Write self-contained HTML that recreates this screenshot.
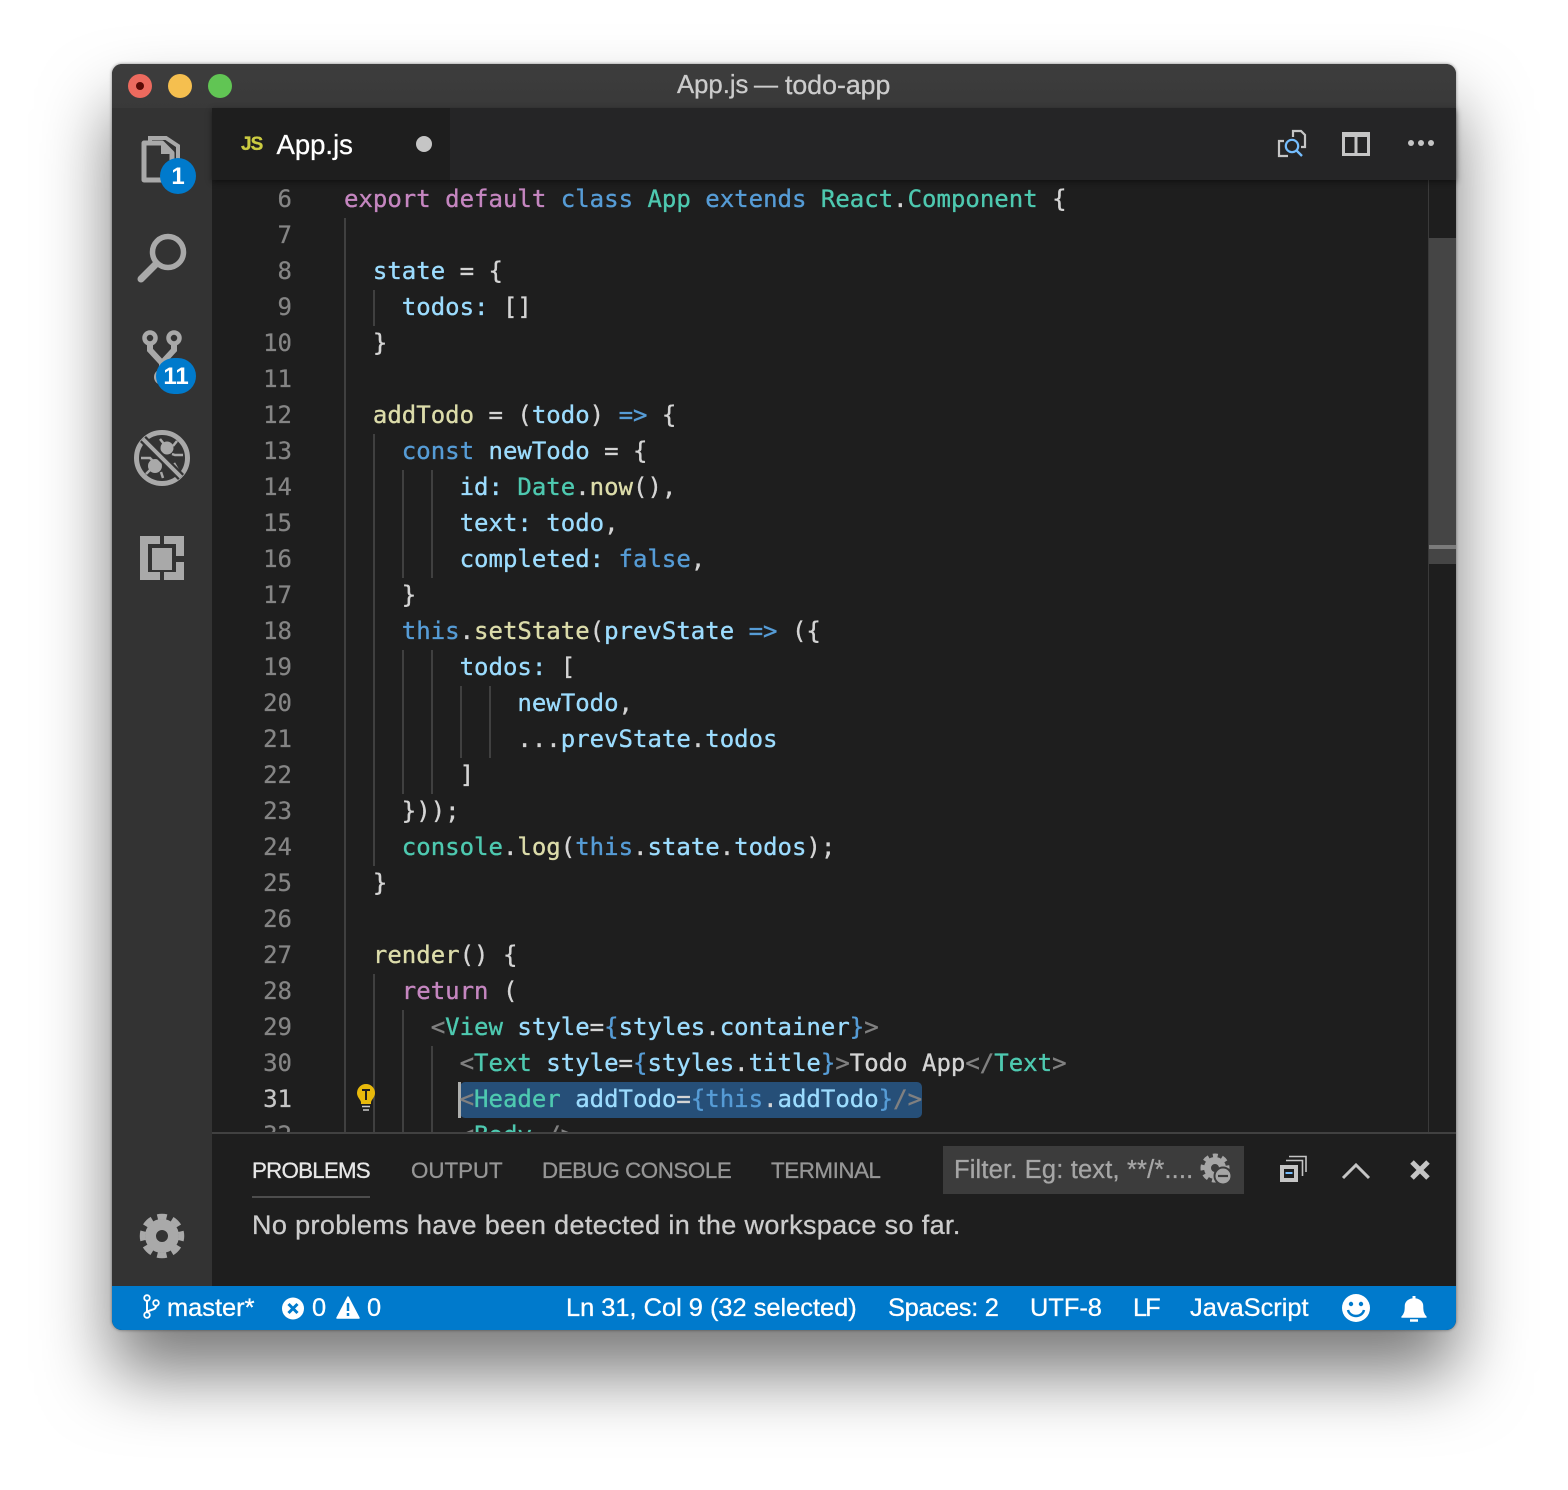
<!DOCTYPE html>
<html lang="en"><head><meta charset="utf-8"><title>App.js — todo-app</title>
<style>
html,body{margin:0;padding:0;background:#fff}
body{width:1568px;height:1490px;position:relative;overflow:hidden;font-family:"Liberation Sans",sans-serif}
.win{position:absolute;left:112px;top:64px;width:1344px;height:1266px;border-radius:10px;background:#1e1e1e;box-shadow:0 44px 70px rgba(0,0,0,.52),0 0 3px rgba(0,0,0,.45)}
.abs,.t{position:absolute}
.t{white-space:pre;line-height:36px;-webkit-text-stroke:.3px currentColor}
.title{left:0;top:0;width:1344px;height:44px;background:linear-gradient(#3d3d3d,#393939);border-radius:10px 10px 0 0}
.activity{left:0;top:44px;width:100px;height:1178px;background:#333}
.tabs{left:100px;top:44px;width:1244px;height:72px;background:#252526;box-shadow:0 2px 6px rgba(0,0,0,.45);z-index:3}
.tab{left:0;top:0;width:238px;height:72px;background:#1e1e1e}
.code{left:100px;top:116px;width:1244px;height:952px;overflow:hidden;background:#1e1e1e}
.ln{position:absolute;left:0;width:80px;text-align:right;height:36px;color:#858585;font:24px/38px "DejaVu Sans Mono","Liberation Mono",monospace;-webkit-text-stroke:.25px currentColor}
.src{position:absolute;left:132px;height:36px;white-space:pre;font:24px/36px "DejaVu Sans Mono","Liberation Mono",monospace;color:#d4d4d4;-webkit-text-stroke:.35px currentColor}
.g{position:absolute;width:2px;background:#404040}
.k{color:#c586c0}.b{color:#569cd6}.c{color:#4ec9b0}.v{color:#9cdcfe}.f{color:#dcdcaa}.p{color:#808080}
.panel{left:100px;top:1068px;width:1244px;height:154px;background:#1e1e1e;border-top:2px solid #414141;box-sizing:border-box}
.status{left:0;top:1222px;width:1344px;height:44px;background:#007acc;border-radius:0 0 10px 10px;color:#fff}
.status .t{font-size:25.4px}
.badge{position:absolute;background:#007acc;color:#fff;font-weight:bold;font-size:24px;line-height:38px;height:36px;text-align:center;border-radius:18px}
svg{position:absolute;overflow:visible}
</style></head><body>
<div class="win">
 <div class="abs title">
  <div class="abs" style="left:16px;top:10px;width:24px;height:24px;border-radius:50%;background:#ec6a5e"><div class="abs" style="left:8px;top:8px;width:8px;height:8px;border-radius:50%;background:#5a0b06"></div></div>
  <div class="abs" style="left:56px;top:10px;width:24px;height:24px;border-radius:50%;background:#f5bf4f"></div>
  <div class="abs" style="left:96px;top:10px;width:24px;height:24px;border-radius:50%;background:#61c554"></div>
  <div class="t" style="left:565px;top:3px;font-size:25.700px;color:#ccc">App.js</div>
  <div class="t" style="left:642px;top:3px;font-size:24px;line-height:38px;color:#ccc">—</div>
  <div class="t" style="left:673px;top:3px;font-size:26.700px;color:#ccc">todo-app</div>
 </div>

 <div class="abs activity">
  <svg style="left:0;top:0" width="100" height="1178" fill="none" stroke="#a9a9a9">
   <!-- explorer -->
   <path d="M38 35V30H54L66 38V62" stroke-width="4"/>
   <path d="M32 35H50L60 45V72H32Z" stroke-width="5" fill="#333" stroke-linejoin="round"/>
   <path d="M49 34V46H61Z" fill="#a9a9a9" stroke="none"/>
   <!-- search -->
   <circle cx="56" cy="144" r="15.500" stroke-width="5.500"/>
   <path d="M44 156L29 171" stroke-width="7" stroke-linecap="round"/>
   <!-- scm -->
   <circle cx="38" cy="230" r="5.500" stroke-width="4.500"/><circle cx="62" cy="230" r="5.500" stroke-width="4.500"/>
   <path d="M38 236V242L50 255V268M62 236V242L50 255" stroke-width="6"/>
   <circle cx="50" cy="269" r="8" fill="#a9a9a9" stroke="none"/>
   <!-- debug -->
   <circle cx="50" cy="350" r="25.500" stroke-width="5"/>
   <circle cx="55" cy="340" r="6.500" fill="#a9a9a9" stroke="none"/>
   <circle cx="43" cy="358" r="7" fill="#a9a9a9" stroke="none"/>
   <path d="M48 331l4 5M65 333l-4 5M71 347h-8l-3-1M66 362l-4-7M29 350h9l3 3M34 366l4-4M51 370l-2-6" stroke-width="2.500"/>
   <path d="M31 331L69 369" stroke="#333" stroke-width="8.500"/>
   <path d="M31 331L69 369" stroke-width="4"/>
   <!-- extensions -->
   <path fill="#a9a9a9" stroke="none" fill-rule="evenodd" d="M28 428H48V436H36V464H48V472H28Z M52 428H72V448H64V436H52Z M64 454H72V472H52V464H64Z M40 440H60V462H40Z"/>
   <!-- gear -->
   <g transform="translate(50,1128)">
    <circle r="11.500" stroke-width="11"/>
    <circle r="19.500" stroke-width="5.500" stroke-dasharray="9.500 5.810" stroke-dashoffset="4.750" transform="rotate(-90)"/>
   </g>
  </svg>
  <div class="badge" style="left:48px;top:50px;width:36px">1</div>
  <div class="badge" style="left:44px;top:250px;width:40px">11</div>
 </div>

 <div class="abs tabs">
  <div class="abs tab">
   <div class="t" style="left:29px;top:19px;font-size:19px;font-weight:bold;color:#cbcb41;letter-spacing:-1px">JS</div>
   <div class="t" style="left:64.500px;top:19px;font-size:27.500px;color:#fff">App.js</div>
   <div class="abs" style="left:204px;top:28px;width:16px;height:16px;border-radius:50%;background:#c5c5c5"></div>
  </div>
  <svg style="left:0;top:0" width="1244" height="72" fill="none" stroke="#c5c5c5">
   <path d="M1072 33H1067V48H1076" stroke-width="2.200"/>
   <path d="M1081 29V23H1089L1093 27V39H1089" stroke-width="2.200"/>
   <circle cx="1080" cy="38" r="6.200" stroke="#75beff" stroke-width="2.200"/>
   <path d="M1084.500 42.500L1090 48" stroke="#75beff" stroke-width="2.400"/>
   <path d="M1131.500 26H1156.500V46.500H1131.500ZM1144 26V46.500" stroke-width="3"/>
   <path d="M1130 26.500H1158" stroke-width="5"/>
   <g fill="#c5c5c5" stroke="none"><circle cx="1199" cy="35" r="3"/><circle cx="1209" cy="35" r="3"/><circle cx="1219" cy="35" r="3"/></g>
  </svg>
 </div>

 <div class="abs code">
  <div class="g" style="left:132px;top:38px;height:914px"></div>
  <div class="g" style="left:161px;top:110px;height:36px"></div>
  <div class="g" style="left:161px;top:254px;height:432px"></div>
  <div class="g" style="left:161px;top:794px;height:158px"></div>
  <div class="g" style="left:190px;top:290px;height:108px"></div>
  <div class="g" style="left:219px;top:290px;height:108px"></div>
  <div class="g" style="left:190px;top:470px;height:144px"></div>
  <div class="g" style="left:219px;top:470px;height:144px"></div>
  <div class="g" style="left:248px;top:506px;height:72px"></div>
  <div class="g" style="left:277px;top:506px;height:72px"></div>
  <div class="g" style="left:190px;top:830px;height:122px"></div>
  <div class="g" style="left:219px;top:866px;height:86px"></div>

  <div class="ln" style="top:0px">6</div><div class="ln" style="top:36px">7</div><div class="ln" style="top:72px">8</div><div class="ln" style="top:108px">9</div><div class="ln" style="top:144px">10</div><div class="ln" style="top:180px">11</div><div class="ln" style="top:216px">12</div><div class="ln" style="top:252px">13</div><div class="ln" style="top:288px">14</div><div class="ln" style="top:324px">15</div><div class="ln" style="top:360px">16</div><div class="ln" style="top:396px">17</div><div class="ln" style="top:432px">18</div><div class="ln" style="top:468px">19</div><div class="ln" style="top:504px">20</div><div class="ln" style="top:540px">21</div><div class="ln" style="top:576px">22</div><div class="ln" style="top:612px">23</div><div class="ln" style="top:648px">24</div><div class="ln" style="top:684px">25</div><div class="ln" style="top:720px">26</div><div class="ln" style="top:756px">27</div><div class="ln" style="top:792px">28</div><div class="ln" style="top:828px">29</div><div class="ln" style="top:864px">30</div><div class="ln" style="top:900px;color:#c6c6c6">31</div><div class="ln" style="top:936px">32</div>

  <div class="abs" style="left:248px;top:902px;width:462px;height:36px;background:#264f78;border-radius:5px"></div>
  <div class="abs" style="left:246px;top:902px;width:3px;height:36px;background:#aeafad"></div>

  <svg style="left:0;top:0" width="200" height="952" fill="none">
   <g transform="translate(9,-4)">
    <path d="M154 917a9 9 0 0 0-9-9 9 9 0 0 0-9 9c0 4 3 6 4 9v2h10v-2c1-3 4-5 4-9z" fill="#e8b90b"/>
    <path d="M141 914h8M145 914v10" stroke="#1e1e1e" stroke-width="2"/>
    <path d="M141 930.500h8M142 934h6" stroke="#ccc" stroke-width="1.600"/>
   </g>
  </svg>

  <div class="src" style="top:1px"><span class="k">export</span> <span class="k">default</span> <span class="b">class</span> <span class="c">App</span> <span class="b">extends</span> <span class="c">React</span>.<span class="c">Component</span> {</div>
  <div class="src" style="top:73px">  <span class="v">state</span> = {</div>
  <div class="src" style="top:109px">    <span class="v">todos:</span> []</div>
  <div class="src" style="top:145px">  }</div>
  <div class="src" style="top:217px">  <span class="f">addTodo</span> = (<span class="v">todo</span>) <span class="b">=&gt;</span> {</div>
  <div class="src" style="top:253px">    <span class="b">const</span> <span class="v">newTodo</span> = {</div>
  <div class="src" style="top:289px">        <span class="v">id:</span> <span class="c">Date</span>.<span class="f">now</span>(),</div>
  <div class="src" style="top:325px">        <span class="v">text:</span> <span class="v">todo</span>,</div>
  <div class="src" style="top:361px">        <span class="v">completed:</span> <span class="b">false</span>,</div>
  <div class="src" style="top:397px">    }</div>
  <div class="src" style="top:433px">    <span class="b">this</span>.<span class="f">setState</span>(<span class="v">prevState</span> <span class="b">=&gt;</span> ({</div>
  <div class="src" style="top:469px">        <span class="v">todos:</span> [</div>
  <div class="src" style="top:505px">            <span class="v">newTodo</span>,</div>
  <div class="src" style="top:541px">            ...<span class="v">prevState</span>.<span class="v">todos</span></div>
  <div class="src" style="top:577px">        ]</div>
  <div class="src" style="top:613px">    }));</div>
  <div class="src" style="top:649px">    <span class="c">console</span>.<span class="f">log</span>(<span class="b">this</span>.<span class="v">state</span>.<span class="v">todos</span>);</div>
  <div class="src" style="top:685px">  }</div>
  <div class="src" style="top:757px">  <span class="f">render</span>() {</div>
  <div class="src" style="top:793px">    <span class="k">return</span> (</div>
  <div class="src" style="top:829px">      <span class="p">&lt;</span><span class="c">View</span> <span class="v">style</span>=<span class="b">{</span><span class="v">styles</span>.<span class="v">container</span><span class="b">}</span><span class="p">&gt;</span></div>
  <div class="src" style="top:865px">        <span class="p">&lt;</span><span class="c">Text</span> <span class="v">style</span>=<span class="b">{</span><span class="v">styles</span>.<span class="v">title</span><span class="b">}</span><span class="p">&gt;</span>Todo App<span class="p">&lt;/</span><span class="c">Text</span><span class="p">&gt;</span></div>
  <div class="src" style="top:901px">        <span class="p">&lt;</span><span class="c">Header</span> <span class="v">addTodo</span>=<span class="b">{this</span>.<span class="v">addTodo</span><span class="b">}</span><span class="p">/&gt;</span></div>
  <div class="src" style="top:937px">        <span class="p">&lt;</span><span class="c">Body</span> <span class="p">/&gt;</span></div>

  <div class="abs" style="left:1216px;top:0;width:1px;height:952px;background:#3a3a3a"></div>
  <div class="abs" style="left:1217px;top:58px;width:27px;height:326px;background:#454545"></div>
  <div class="abs" style="left:1217px;top:365px;width:27px;height:4px;background:#7b7b7b"></div>
 </div>

 <div class="abs panel">
  <div class="t" style="left:40px;top:19px;font-size:22.300px;color:#e7e7e7;letter-spacing:-.75px">PROBLEMS</div>
  <div class="t" style="left:199px;top:19px;font-size:22.300px;color:#969696">OUTPUT</div>
  <div class="t" style="left:330px;top:19px;font-size:22.300px;color:#969696;letter-spacing:-.4px">DEBUG CONSOLE</div>
  <div class="t" style="left:559px;top:19px;font-size:22.300px;color:#969696;letter-spacing:-.4px">TERMINAL</div>
  <div class="abs" style="left:40px;top:62px;width:118px;height:2px;background:#4d4d4d"></div>
  <div class="abs" style="left:731px;top:12px;width:301px;height:48px;background:#3c3c3c"></div>
  <div class="t" style="left:742px;top:18px;font-size:25.500px;letter-spacing:.16px;color:#a6a6a6">Filter. Eg: text, **/*....</div>
  <div class="t" style="left:40px;top:73px;font-size:27px;letter-spacing:.36px;color:#ccc">No problems have been detected in the workspace so far.</div>
  <svg style="left:0;top:0" width="1244" height="152" fill="none" stroke="#c5c5c5">
   <g transform="translate(1003,34)" stroke="#a6a6a6">
    <circle r="7.500" stroke-width="7"/>
    <circle r="12.500" stroke-width="4" stroke-dasharray="5.500 4.320" stroke-dashoffset="2.700" transform="rotate(-90)"/>
   </g>
   <circle cx="1011" cy="42" r="8.500" fill="#a6a6a6" stroke="#3c3c3c" stroke-width="2"/>
   <path d="M1006 42H1016" stroke="#3c3c3c" stroke-width="2.200"/>
   <path d="M1074 26.500H1090.500V42M1077 22.500H1094V38" stroke-width="1.600"/>
   <path d="M1070 33H1084V46H1070Z" stroke-width="4"/>
   <path d="M1073.500 39H1080.500" stroke="#75beff" stroke-width="2"/>
   <path d="M1131 44L1144 31L1157 44" stroke-width="3"/>
   <path d="M1200 28L1216 44M1216 28L1200 44" stroke-width="5"/>
  </svg>
 </div>

 <div class="abs status">
  <svg style="left:0;top:0" width="1344" height="44" fill="none" stroke="#fff">
   <circle cx="35" cy="12" r="2.800" stroke-width="1.800"/><circle cx="35" cy="29" r="2.800" stroke-width="1.800"/><circle cx="44" cy="17" r="2.800" stroke-width="1.800"/>
   <path d="M35 15V26M44 20C44 25 36 23 35 27" stroke-width="2"/>
   <circle cx="181" cy="22.500" r="11" fill="#fff" stroke="none"/>
   <path d="M176.500 18L185.500 27M185.500 18L176.500 27" stroke="#007acc" stroke-width="3"/>
   <path d="M236 11L247 32H225Z" fill="#fff" stroke="#fff" stroke-width="1.500" stroke-linejoin="round"/>
   <path d="M236 17V25M236 27V30" stroke="#007acc" stroke-width="2.500"/>
   <circle cx="1244" cy="22" r="14" fill="#fff" stroke="none"/>
   <circle cx="1239" cy="18" r="2.200" fill="#007acc" stroke="none"/><circle cx="1249" cy="18" r="2.200" fill="#007acc" stroke="none"/>
   <path d="M1236 24C1238 32 1250 32 1252 24" stroke="#007acc" stroke-width="2.500"/>
   <path d="M1302 31H1290C1293 28 1293.500 25 1293.500 20C1293.500 16 1297 13 1302 13C1307 13 1310.500 16 1310.500 20C1310.500 25 1311 28 1314 31Z" fill="#fff" stroke="#fff" stroke-width="1.500" stroke-linejoin="round"/>
   <path d="M1298 34.500H1306" stroke-width="2.500"/>
   <path d="M1302 13V10" stroke-width="3"/>
  </svg>
  <div class="t" style="left:55px;top:4px">master*</div>
  <div class="t" style="left:200px;top:4px">0</div>
  <div class="t" style="left:255px;top:4px">0</div>
  <div class="t" style="left:454px;top:4px">Ln 31, Col 9 (32 selected)</div>
  <div class="t" style="left:776px;top:4px;letter-spacing:-.25px">Spaces: 2</div>
  <div class="t" style="left:918px;top:4px">UTF-8</div>
  <div class="t" style="left:1021px;top:4px;letter-spacing:-2px">LF</div>
  <div class="t" style="left:1078px;top:4px">JavaScript</div>
 </div>
</div>
</body></html>
